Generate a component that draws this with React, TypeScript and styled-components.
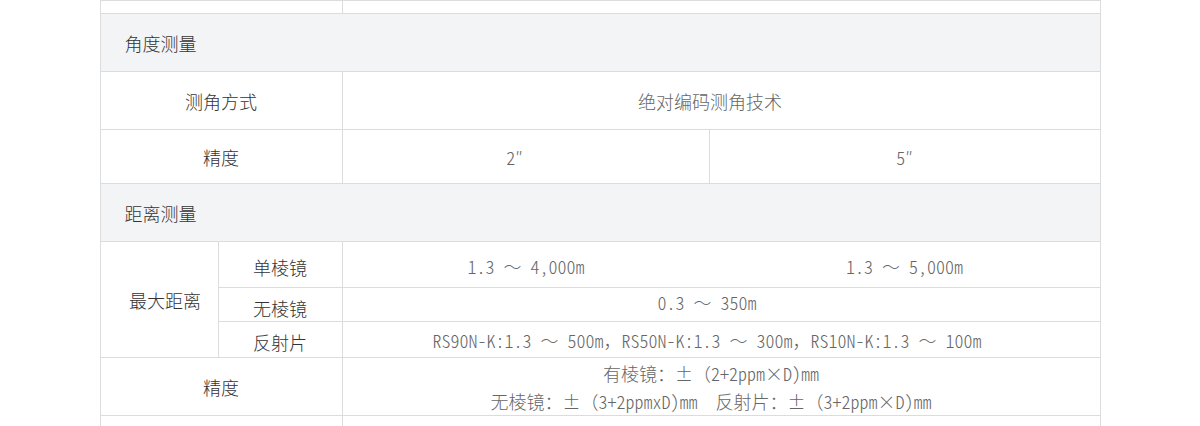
import React from "react";
import styled, {createGlobalStyle} from "styled-components";

const GlobalStyle = createGlobalStyle`
  html, body {
    margin: 0;
    padding: 0;
    background: #fff;
  }
  body {
    font-family: "Noto Sans CJK SC", "Noto Sans", sans-serif;
  }
`;

const Table = styled.table`
  width: 1000px;
  margin: 0 auto;
  border-collapse: collapse;
  table-layout: fixed;
  font-size: 18px;
  font-weight: 300;
`;

const Row = styled.tr<{ $h: number }>`
  height: ${p => p.$h}px;
`;

const Section = styled.td`
  border: 1px solid #dcdcdc;
  background: #f3f4f6;
  color: #333;
  padding: 0 0 0 24px;
  text-align: left;
  vertical-align: middle;
`;

const Label = styled.td<{ $pl?: number; $pt?: number }>`
  border: 1px solid #dcdcdc;
  color: #333;
  text-align: center;
  vertical-align: middle;
  padding: ${p => p.$pt || 0}px 0 0 ${p => p.$pl || 0}px;
`;

const Value = styled.td<{ $pr?: number; $pt?: number; $pb?: number }>`
  border: 1px solid #dcdcdc;
  color: #666;
  text-align: center;
  vertical-align: middle;
  padding: ${p => p.$pt || 0}px ${p => p.$pr || 0}px ${p => p.$pb || 0}px 0;
  white-space: pre;
`;

// latin runs in half-width forms, like a SimHei-style page font
const Half = styled.span`
  font-feature-settings: "hwid" 1;
`;

const Split = styled.div`
  display: grid;
  grid-template-columns: 367px 1fr;
  text-align: center;
`;

const Lines = styled.div`
  line-height: 28px;
`;

const Txt = ({children}: { children: string }) => {
    const parts = children.match(/[\x20-\x7e]+|[^\x20-\x7e]+/g) || [];
    return (
        <>
            {parts.map((s, i) => /^[\x20-\x7e]/.test(s) ? <Half key={i}>{s}</Half> : <span key={i}>{s}</span>)}
        </>
    );
};

export default function App() {
    return (
        <>
            <GlobalStyle/>
            <Table>
                <colgroup>
                    <col style={{width: 118}}/>
                    <col style={{width: 124}}/>
                    <col style={{width: 367}}/>
                    <col style={{width: 391}}/>
                </colgroup>
                <tbody>
                <Row $h={13}>
                    <Label colSpan={2}/>
                    <Value colSpan={2}/>
                </Row>
                <Row $h={58}>
                    <Section colSpan={4}>角度测量</Section>
                </Row>
                <Row $h={58}>
                    <Label colSpan={2}>测角方式</Label>
                    <Value colSpan={2} $pr={22}>绝对编码测角技术</Value>
                </Row>
                <Row $h={54}>
                    <Label colSpan={2}>精度</Label>
                    <Value $pr={22}><Txt>2″</Txt></Value>
                    <Value><Txt>5″</Txt></Value>
                </Row>
                <Row $h={58}>
                    <Section colSpan={4}>距离测量</Section>
                </Row>
                <Row $h={46}>
                    <Label rowSpan={3} $pl={12}>最大距离</Label>
                    <Label $pt={4}>单棱镜</Label>
                    <Value colSpan={2} $pt={2}>
                        <Split>
                            <span><Txt>1.3 ～ 4,000m</Txt></span>
                            <span><Txt>1.3 ～ 5,000m</Txt></span>
                        </Split>
                    </Value>
                </Row>
                <Row $h={34}>
                    <Label $pt={6}>无棱镜</Label>
                    <Value colSpan={2} $pr={28} $pb={6}><Txt>0.3 ～ 350m</Txt></Value>
                </Row>
                <Row $h={36}>
                    <Label $pt={4}>反射片</Label>
                    <Value colSpan={2} $pr={28}>
                        <Txt>RS90N-K:1.3 ～ 500m，RS50N-K:1.3 ～ 300m，RS10N-K:1.3 ～ 100m</Txt>
                    </Value>
                </Row>
                <Row $h={58}>
                    <Label colSpan={2}>精度</Label>
                    <Value colSpan={2} $pr={20}>
                        <Lines>
                            <div><Txt>有棱镜：±（2+2ppm×D)mm</Txt></div>
                            <div><Txt>无棱镜：±（3+2ppmxD)mm  反射片：±（3+2ppm×D)mm</Txt></div>
                        </Lines>
                    </Value>
                </Row>
                <Row $h={30}>
                    <Label colSpan={2}/>
                    <Value colSpan={2}/>
                </Row>
                </tbody>
            </Table>
        </>
    );
}
